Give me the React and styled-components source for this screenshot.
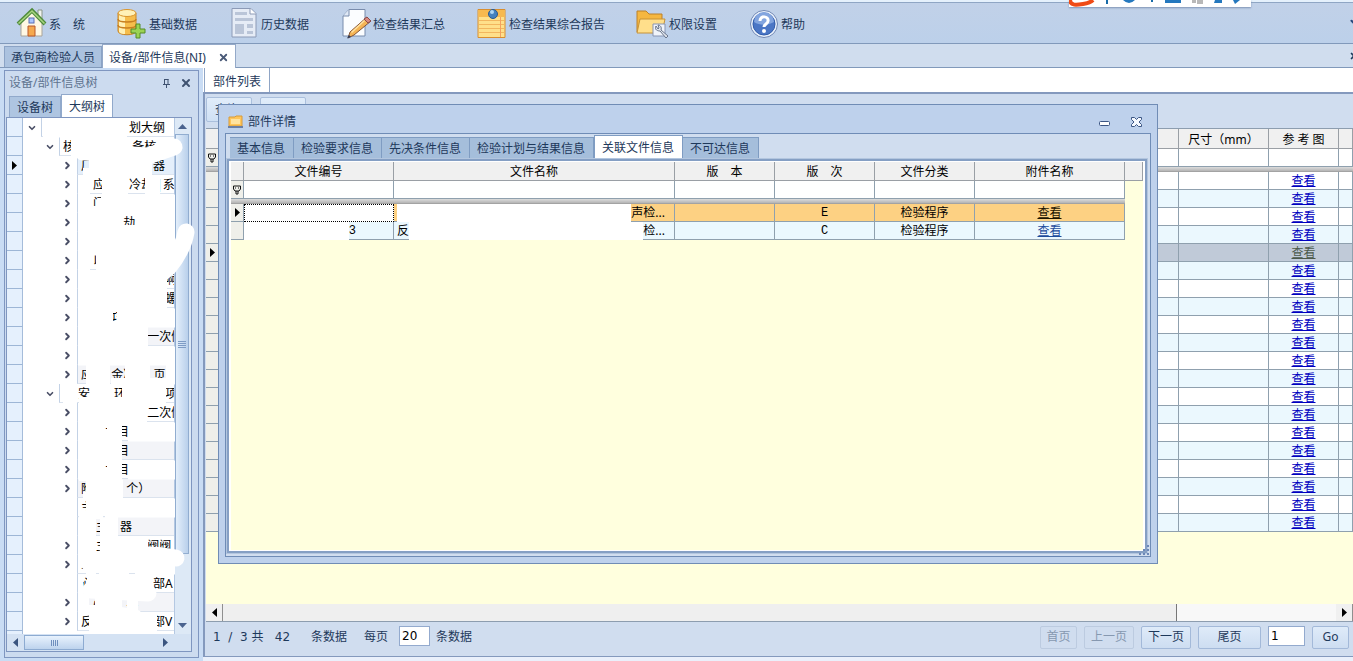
import React, { useState } from "react";
import styled, { createGlobalStyle } from "styled-components";
import { ChevronDown, ChevronRight, X } from "lucide-react";

const menuItems = [
  { label: "系　统", icon: "home" },
  { label: "基础数据", icon: "database" },
  { label: "历史数据", icon: "history" },
  { label: "检查结果汇总", icon: "edit" },
  { label: "检查结果综合报告", icon: "note" },
  { label: "权限设置", icon: "folder" },
  { label: "帮助", icon: "help" },
];

const treeRows = [
  { depth: 1, open: true, text: "　　　　　　　划大纲" },
  { depth: 2, open: true, text: "核　　　　   备核" },
  { depth: 3, chevron: true, text: "厂　　　　　器", tone: "active" },
  { depth: 3, chevron: true, text: "　应　　冷却 |系" },
  { depth: 3, chevron: true, text: "　门" },
  { depth: 3, chevron: true, text: "　　　  劫" },
  { depth: 3, chevron: true, text: "" },
  { depth: 3, chevron: true, text: "　以" },
  { depth: 3, chevron: true, text: "　　　　　　　啊" },
  { depth: 3, chevron: true, text: "　　　　　　　螺" },
  { depth: 3, chevron: true, text: "　　  巧" },
  { depth: 3, chevron: true, text: "　　　　　  一次侧", tone: "shade" },
  { depth: 3, chevron: true, text: "" },
  { depth: 3, chevron: true, text: "应　  金冷　  页", tone: "shade" },
  { depth: 2, open: true, text: "　 安　　环　　　 项" },
  { depth: 3, chevron: true, text: "　　　　　  二次侧" },
  { depth: 3, chevron: true, text: "　　力目" },
  { depth: 3, chevron: true, text: "　　　目", tone: "shade" },
  { depth: 3, chevron: true, text: "　　力目" },
  { depth: 3, chevron: true, text: "附　　   个）", tone: "shade" },
  { depth: 3, text: "主　   头" },
  { depth: 3, text: "　 主　器", tone: "shade" },
  { depth: 3, chevron: true, text: "　 主　　　 阀阀" },
  { depth: 3, chevron: true, text: "人　  人　　双" },
  { depth: 3, text: "心　　　　　部A" },
  { depth: 3, chevron: true, text: "　心　   本", tone: "shade" },
  { depth: 3, chevron: true, text: "反　　　　　部V" },
];

const detailTabs = [
  "基本信息",
  "检验要求信息",
  "先决条件信息",
  "检验计划与结果信息",
  "关联文件信息",
  "不可达信息",
];

const partRows = Array.from({ length: 20 }, (_, i) => i);

const MenuIcon = ({ name }) => {
  switch (name) {
    case "home":
      return (
        <IconSvg viewBox="0 0 32 32">
          <path d="M5 15V29H26V15L16 5z" fill="#fff8e4" stroke="#a9a49a" />
          <path d="M22 3h4v9l-4-4z" fill="#f1f4ef" stroke="#8a9787" />
          <path d="M2 17L16 3.500 29 17" fill="none" stroke="#4f8b3c" strokeWidth="4" />
          <path d="M2.500 16.500L16 4 28.500 16.500" fill="none" stroke="#a9d581" strokeWidth="1.500" />
          <rect x="13" y="11" width="5" height="5" fill="#a9c6ff" stroke="#5b6eb6" />
          <path d="M12 29V19h7v10z" fill="#f5a94e" stroke="#b8572a" />
        </IconSvg>
      );
    case "database":
      return (
        <IconSvg viewBox="0 0 32 32">
          <path d="M2 6v18c0 5 18 5 18 0V6z" fill="#f6bd4c" stroke="#c98524" />
          <path d="M3 8v17c2 2 4 2 6 2V9z" fill="#fff0b4" />
          <ellipse cx="11" cy="6" rx="9" ry="3.500" fill="#fff1b8" stroke="#d9952d" />
          <path d="M2 12c0 4 18 4 18 0M2 18c0 4 18 4 18 0" fill="none" stroke="#c87f21" strokeWidth="1.500" />
          <path d="M20 17h4v5h5v4h-5v5h-4v-5h-5v-4h5z" fill="#9bd354" stroke="#558b27" />
        </IconSvg>
      );
    case "history":
      return (
        <IconSvg viewBox="0 0 32 32">
          <path d="M4 1.500h19l5 5V30H4z" fill="#e6ecf6" stroke="#8c9ab6" />
          <path d="M22 1.500V7h6" fill="#fff" stroke="#8c9ab6" />
          <path d="M7 5h12v3H7zM7 11h18v3H7zM7 17h9v10H7zM19 17h6v4h-6zM19 24h6v3h-6z" fill="#bac5d8" />
        </IconSvg>
      );
    case "edit":
      return (
        <IconSvg viewBox="0 0 32 32">
          <path d="M9 2.500h16V29H3V9z" fill="#fbfdff" stroke="#798cac" />
          <path d="M9 2.500V9H3" fill="#dfe8f5" stroke="#798cac" />
          <path d="M27 10l4 4L14 28l-6 3 2-6z" fill="#f5b455" stroke="#855538" />
          <path d="M27 10l4 4-3 2-4-4z" fill="#d98a80" stroke="#8e4a4a" />
          <path d="M24.500 13.500L11.500 25.500" stroke="#ffe3a2" strokeWidth="1.500" />
          <path d="M9 28l2 2-4 1.500z" fill="#29395b" />
        </IconSvg>
      );
    case "note":
      return (
        <IconSvg viewBox="0 0 32 32">
          <path d="M2 2.500h27v28H2z" fill="#ffe08a" stroke="#d98e2e" />
          <path d="M2.500 3h26v7h-26z" fill="#f7b94f" />
          <path d="M3 13.500h25M3 17.500h25M3 21.500h25M3 25.500h25" stroke="#f2b65e" />
          <path d="M24.500 10v20" stroke="#f3a060" />
          <circle cx="17" cy="7" r="4.500" fill="#4582be" stroke="#295b92" />
          <circle cx="16" cy="5" r="2" fill="#acd6f5" />
        </IconSvg>
      );
    case "folder":
      return (
        <IconSvg viewBox="0 0 32 32">
          <path d="M1 25V4h9l3 3h13v19z" fill="#f5b741" stroke="#bc812b" />
          <path d="M4 12h25l-3 14H1z" fill="#ffdf8b" stroke="#c79238" />
          <path d="M17 17h12v12H17z" fill="#f0f4fb" stroke="#8794b2" />
          <path d="M20 19c-2 4 2 5 4 5l6 7 2-2-7-6c1-3-1-5-3-5l1 3-1 1z" fill="#e0e5ed" stroke="#69758b" />
        </IconSvg>
      );
    default:
      return (
        <IconSvg viewBox="0 0 32 32">
          <circle cx="16" cy="17" r="13.500" fill="#e9f0fa" stroke="#7087b4" />
          <circle cx="16" cy="17" r="11" fill="#4b76c5" stroke="#315caa" />
          <path d="M6 15a10 10 0 0 1 20 0c-5 3-14 4-20 0" fill="#83a5df" />
          <path d="M12 14c0-6 9-5 8 0 0 3-4 3-4 6" fill="none" stroke="#fff" strokeWidth="3" />
          <circle cx="16" cy="24" r="2" fill="#fff" />
        </IconSvg>
      );
  }
};

const FilterIcon = () => (
  <FilterSvg viewBox="0 0 9 10">
    <path d="M.5 1h7v3L6 6H2L.5 4zM3 6v3h2V6M2 3h1M5 3h1" fill="none" stroke="#111" />
  </FilterSvg>
);

const Arrow = ({ dir = "right", color = "#000" }) => {
  const shapes = {
    right: "M2 0L7 4.500 2 9z",
    left: "M7 0L2 4.500 7 9z",
    up: "M0 7L4.500 2 9 7z",
    down: "M0 2L4.500 7 9 2z",
  };
  return (
    <ArrowSvg viewBox="0 0 9 9">
      <path d={shapes[dir]} fill={color} />
    </ArrowSvg>
  );
};

// white strokes hiding the confidential part of the tree labels
const TreeRedaction = () => (
  <RedactionSvg viewBox="0 0 180 516">
    <path
      d="M20 10H104M48 29H106M66 48H129M55 67H67M79 67H105M122 67H137M55 86H69M78 86H152M55 105H99M115 105H152M55 124H152M55 143H67M73 143H152M55 162H144M55 181H144M55 200H90M94 200H152M55 219H125M55 238H152M63 257H87M102 257H127M143 257H152M40 276H54M68 276H89M99 276H143M55 295H124M55 314H80M84 314H99M105 314H152M55 333H99M55 352H80M84 352H99M105 352H152M63 371H100M63 390H76M82 390H152M55 409H73M77 409H95M55 428H73M77 428H125M63 447H73M76 447H106M112 447H152M55 466H60M64 466H130M55 485H66M72 485H99M104 485H115M66 504H134"
      stroke="#fff"
      strokeWidth="19"
    />
    <g fill="none" stroke="#fff" strokeLinecap="round" strokeWidth="17">
      <path d="M60 34L125 38 151 29" />
      <path d="M163 114Q160 132 145 150L120 170" />
      <path d="M65 444Q110 432 153 440" />
      <path d="M68 472L125 475M82 495L112 500" />
    </g>
    <g fill="none" stroke="#fff" strokeWidth="8">
      <path d="M60 54H72M66 92H90M98 111H120M80 207H96M88 264H104M125 264H145M56 283H72M88 283H102M56 321H85M56 359H85M60 378H64M56 397H80M56 491H72" />
    </g>
  </RedactionSvg>
);

const InputMethodBar = () => (
  <ImeBar>
    <svg width="182" height="7" viewBox="0 0 182 7">
      <path d="M1 0c0 6 7 5 13 4s9-3 10-4" fill="none" stroke="#ef4b16" strokeWidth="4" />
      <path d="M38 0v4M83 0v2" stroke="#176ba8" strokeWidth="2" />
      <path d="M54 0q6 6 12 0zM96 0h16v3H96zM146 0h7v3h-8zM164 0h7l-5 4z" fill="#2478be" />
      <path d="M123 0h4v3h-4zM128 0h6v4h-6z" fill="#b8b8b8" />
    </svg>
  </ImeBar>
);

const Sidebar = () => (
  <SidePanel>
    <SideTitle>
      <span>设备/部件信息树</span>
      <TitleTools>
        <GhostButton aria-label="固定">
          <svg width="9" height="10" viewBox="0 0 9 10">
            <path d="M2.500 1v5M6 1v5M2 1.500h4.500M1 6.500h7M4.500 7v3" fill="none" stroke="#3f5270" />
          </svg>
        </GhostButton>
        <GhostButton aria-label="关闭">
          <X size={12} strokeWidth={4} />
        </GhostButton>
      </TitleTools>
    </SideTitle>
    <SideTabs>
      <SideTab>设备树</SideTab>
      <SideTab $active>大纲树</SideTab>
    </SideTabs>
    <TreeFrame>
      <TreeBody>
        <TreeList>
          {treeRows.map((row, i) => (
            <TreeRow key={i}>
              <TreeHead>{i === 2 && <Arrow />}</TreeHead>
              <TreeToggle $depth={row.depth} aria-label="展开">
                {row.open && <ChevronDown size={10} strokeWidth={4} />}
                {row.chevron && <ChevronRight size={11} strokeWidth={4} />}
              </TreeToggle>
              <TreeLabel $tone={row.tone}>{row.text}</TreeLabel>
            </TreeRow>
          ))}
          <TreeRow>
            <TreeHead />
          </TreeRow>
        </TreeList>
        <VScroll>
          <Arrow dir="up" color="#4b648f" />
          <VThumb>
            <i />
            <i />
            <i />
            <i />
          </VThumb>
          <Arrow dir="down" color="#4b648f" />
        </VScroll>
        <TreeRedaction />
      </TreeBody>
      <HScroll>
        <Arrow dir="left" color="#3b557f" />
        <HThumb>
          <i />
          <i />
          <i />
          <i />
        </HThumb>
        <HRest />
        <Arrow dir="right" color="#3b557f" />
        <HEnd />
      </HScroll>
    </TreeFrame>
  </SidePanel>
);

const PartTable = () => (
  <DataTable>
    <colgroup>
      <col width="13" />
      <col />
      <col width="90" />
      <col width="70" />
      <col width="14" />
    </colgroup>
    <thead>
      <HeadRow $tall>
        <Th />
        <Th />
        <Th>尺寸（mm）</Th>
        <Th>参 考 图</Th>
        <Th />
      </HeadRow>
      <FilterRow>
        <HeadCell>
          <FilterIcon />
        </HeadCell>
        <Td />
        <Td />
        <Td />
        <Td />
      </FilterRow>
      <SplitRow>
        <td colSpan="5" />
      </SplitRow>
    </thead>
    <tbody>
      {partRows.map((i) => (
        <Row key={i} $tone={i === 4 ? "selected" : i % 2 ? "even" : "odd"}>
          <HeadCell>{i === 4 && <Arrow />}</HeadCell>
          <Td />
          <Td />
          <Td>
            <ViewLink href="#" $color={i === 4 ? "#4c5a4c" : "#0000c0"}>
              查看
            </ViewLink>
          </Td>
          <Td />
        </Row>
      ))}
    </tbody>
  </DataTable>
);

const FileTable = () => (
  <DataTable>
    <colgroup>
      <col width="13" />
      <col width="150" />
      <col />
      <col width="100" />
      <col width="100" />
      <col width="100" />
      <col width="150" />
      <col width="18" />
    </colgroup>
    <thead>
      <HeadRow>
        <Th />
        <Th>文件编号</Th>
        <Th>文件名称</Th>
        <Th>版　本</Th>
        <Th>版　次</Th>
        <Th>文件分类</Th>
        <Th>附件名称</Th>
        <Th />
      </HeadRow>
      <FilterRow>
        <HeadCell>
          <FilterIcon />
        </HeadCell>
        <Td />
        <Td />
        <Td />
        <Td />
        <Td />
        <Td />
        <BlankCell />
      </FilterRow>
      <SplitRow>
        <td colSpan="7" />
        <BlankCell />
      </SplitRow>
    </thead>
    <tbody>
      <Row $tone="focus">
        <HeadCell>
          <Arrow />
        </HeadCell>
        <FocusCell />
        <Td>
          <Fragments>
            <Lead />
            <Erased />
            声检...
          </Fragments>
        </Td>
        <Td />
        <MonoCell>E</MonoCell>
        <Td>检验程序</Td>
        <Td>
          <ViewLink href="#" $color="#1c1400">
            查看
          </ViewLink>
        </Td>
        <BlankCell />
      </Row>
      <Row $tone="even">
        <HeadCell />
        <MonoCell>
          <Fragments>
            <Erased />
            3<Tail />
          </Fragments>
        </MonoCell>
        <Td>
          <Fragments>
            <Lead />
            反
            <Erased />
            检...
          </Fragments>
        </Td>
        <Td />
        <MonoCell>C</MonoCell>
        <Td>检验程序</Td>
        <Td>
          <ViewLink href="#" $color="#1d4c9c">
            查看
          </ViewLink>
        </Td>
        <BlankCell />
      </Row>
    </tbody>
  </DataTable>
);

const DetailDialog = () => {
  const [tab, setTab] = useState(4);
  return (
    <Dialog role="dialog" aria-label="部件详情">
      <DialogTitle>
        <svg width="16" height="14" viewBox="0 0 16 14">
          <path d="M1 2h6l1-1h6v10H1z" fill="#ffc65b" stroke="#d79a3a" />
          <path d="M3 4h9v5H3z" fill="#ffe3a0" />
          <path d="M0 11h15v2H0z" fill="#6b7fa4" />
        </svg>
        <span>部件详情</span>
        <DialogTools>
          <GhostButton aria-label="最小化">
            <svg width="12" height="12" viewBox="0 0 12 12">
              <rect x=".5" y="5.500" width="10" height="4" rx="1" fill="#fff" stroke="#3c5684" />
            </svg>
          </GhostButton>
          <GhostButton aria-label="关闭">
            <svg width="13" height="12" viewBox="0 0 13 12">
              <path d="M1.500 1.500h3l2 2 2-2h3v2L9 6l2.500 2.500v2h-3l-2-2-2 2h-3v-2L4 6 1.500 3.500z" fill="#f5f9ff" stroke="#3c5684" />
            </svg>
          </GhostButton>
        </DialogTools>
      </DialogTitle>
      <DialogBody>
        <DialogTabs>
          {detailTabs.map((name, i) => (
            <DialogTab key={name} $active={i === tab} onClick={() => setTab(i)}>
              {name}
            </DialogTab>
          ))}
        </DialogTabs>
        <DialogGrid>
          <GridFill>
            <FileTable />
          </GridFill>
        </DialogGrid>
        <Grip viewBox="0 0 10 10">
          <path d="M8 0h2v2H8zM4 4h2v2H4zM8 4h2v2H8zM0 8h2v2H0zM4 8h2v2H4zM8 8h2v2H8z" fill="#6c88b8" />
        </Grip>
      </DialogBody>
    </Dialog>
  );
};

const App = () => (
  <>
    <GlobalStyle />
    <Window>
      <Toolbar>
        {menuItems.map((item) => (
          <MenuButton key={item.icon}>
            <MenuIcon name={item.icon} />
            <MenuText>{item.label}</MenuText>
          </MenuButton>
        ))}
        <ToolbarEnd>
          <ChevronDown size={10} strokeWidth={5} />
        </ToolbarEnd>
      </Toolbar>
      <DocTabs>
        <DocTab>承包商检验人员</DocTab>
        <DocTab $active>
          设备/部件信息(NI)
          <X size={11} strokeWidth={4} />
        </DocTab>
        <DocEnd>
          <X size={10} strokeWidth={4} />
        </DocEnd>
      </DocTabs>
      <Workspace>
        <Sidebar />
        <Main>
          <MainTabs>
            <MainTab>部件列表</MainTab>
          </MainTabs>
          <MainPanel>
            <MainTools>
              <ToolButton>查询</ToolButton>
              <ToolButton />
            </MainTools>
            <GridArea>
              <PartTable />
            </GridArea>
            <MainScroll>
              <ScrollButton aria-label="向左">
                <Arrow dir="left" />
              </ScrollButton>
              <ScrollThumb />
              <ScrollTrack />
              <ScrollButton aria-label="向右">
                <Arrow />
              </ScrollButton>
            </MainScroll>
            <Pager>
              <PageInfo>1&nbsp; /&nbsp; 3 共&nbsp;&nbsp; 42</PageInfo>
              <PageText>条数据</PageText>
              <label htmlFor="pageSize">每页</label>
              <SizeInput id="pageSize" defaultValue="20" />
              <span>条数据</span>
              <PagerRight>
                <PageButton disabled>首页</PageButton>
                <PageButton $size="mid" disabled>
                  上一页
                </PageButton>
                <PageButton $size="mid">下一页</PageButton>
                <PageButton $size="wide">尾页</PageButton>
                <PageInput aria-label="页码" defaultValue="1" />
                <PageButton>Go</PageButton>
              </PagerRight>
            </Pager>
          </MainPanel>
        </Main>
      </Workspace>
      <DetailDialog />
      <InputMethodBar />
    </Window>
  </>
);

const GlobalStyle = createGlobalStyle`
  * {
    box-sizing: border-box;
  }
  body {
    margin: 0;
    font-family: "Noto Sans", "Noto Sans CJK SC", sans-serif;
    font-size: 12px;
    line-height: 16px;
    color: #1e395b;
  }
  button, input {
    font: inherit;
    color: inherit;
    margin: 0;
    padding: 0;
  }
`;

const Window = styled.div`
  position: relative;
  height: 100vh;
  min-height: 600px;
  display: flex;
  flex-direction: column;
  overflow: hidden;
  background: #c9dcf4;
  white-space: nowrap;
`;

const Toolbar = styled.nav`
  height: 44px;
  flex: none;
  display: flex;
  align-items: center;
  gap: 31px;
  padding: 1px 0 0 16px;
  border-top: 2px solid #e5f1fc;
  border-bottom: 1px solid #8199ba;
  background: linear-gradient(#8fa6c4 1px, #c1d1e8 1px, #bcd0ea);
`;

const MenuButton = styled.button`
  display: flex;
  align-items: center;
  gap: 1px;
  border: 0;
  background: none;
`;

const MenuText = styled.span`
  padding-top: 4px;
`;

const IconSvg = styled.svg`
  width: 32px;
  height: 32px;
`;

const ToolbarEnd = styled.span`
  margin-left: auto;
  margin-right: -6px;
  color: #27477b;
`;

const DocTabs = styled.div`
  height: 24px;
  flex: none;
  display: flex;
  align-items: stretch;
  padding-left: 4px;
  background: #d0ddee;
  border-bottom: 1px solid #8199ba;
`;

const DocTab = styled.button`
  display: flex;
  align-items: center;
  gap: 12px;
  padding: 2px 6px 0;
  border: 1px solid ${({ $active }) => ($active ? "#94a9c8" : "#8ba3c5")};
  border-bottom: 0;
  margin: ${({ $active }) => ($active ? "0 0 -1px" : "2px 0 0")};
  background: ${({ $active }) => ($active ? "#fff" : "#abc2df")};
  svg {
    color: #4a5a78;
  }
`;

const DocEnd = styled.span`
  display: flex;
  align-items: center;
  margin-left: auto;
  margin-right: -6px;
`;

const Workspace = styled.div`
  flex: 1;
  min-height: 0;
  display: flex;
  gap: 4px;
  padding-left: 4px;
`;

const SidePanel = styled.aside`
  width: 195px;
  flex: none;
  display: flex;
  flex-direction: column;
  margin: 2px 0 3px;
  padding: 0 6px 5px 1px;
  border: 1px solid #7f96c0;
  background: #ccdbef;
`;

const SideTitle = styled.div`
  height: 23px;
  flex: none;
  display: flex;
  align-items: center;
  justify-content: space-between;
  padding-left: 3px;
  color: #60748f;
`;

const TitleTools = styled.div`
  display: flex;
  gap: 9px;
  color: #3f5270;
`;

const GhostButton = styled.button`
  display: flex;
  align-items: center;
  border: 0;
  background: none;
`;

const SideTabs = styled.div`
  height: 23px;
  flex: none;
  display: flex;
  padding-left: 3px;
`;

const SideTab = styled.button`
  width: 52px;
  border: 1px solid #91a9cb;
  border-bottom: 0;
  margin-top: ${({ $active }) => ($active ? "0" : "2px")};
  padding-top: 2px;
  background: ${({ $active }) => ($active ? "#fff" : "#aec5e1")};
`;

const TreeFrame = styled.div`
  flex: 1;
  min-height: 0;
  display: flex;
  flex-direction: column;
  border: 1px solid #7f96c0;
  background: #d3e1f2;
`;

const TreeBody = styled.div`
  position: relative;
  flex: 1;
  min-height: 0;
  display: flex;
`;

const TreeList = styled.ul`
  flex: 1;
  min-width: 0;
  overflow: hidden;
  margin: 0;
  padding: 0;
  list-style: none;
  background: #fff;
  color: #000;
`;

const TreeRow = styled.li`
  height: 19px;
  display: flex;
`;

const TreeHead = styled.span`
  width: 16px;
  flex: none;
  display: flex;
  align-items: center;
  justify-content: center;
  border-right: 1px solid #a5bcda;
  border-bottom: 1px solid #9db6d6;
  background: #e5f0fd;
`;

const TreeToggle = styled.button`
  width: 18px;
  flex: none;
  display: flex;
  align-items: center;
  justify-content: center;
  margin-left: ${({ $depth }) => ($depth - 1) * 18}px;
  padding-right: 1px;
  border: 0;
  background: none;
  color: #4a4f66;
`;

const labelTones = { active: "#e4effb", shade: "#f3f4f8" };

const TreeLabel = styled.span`
  flex: 1;
  min-width: 0;
  overflow: hidden;
  padding: 2px 0 0 3px;
  border-left: 1px solid #c3d2e6;
  border-bottom: 1px solid #dbe3ee;
  background: ${({ $tone }) => labelTones[$tone] || "#fff"};
  white-space: pre;
`;

const VScroll = styled.div`
  width: 17px;
  flex: none;
  display: flex;
  flex-direction: column;
  align-items: center;
  gap: 3px;
  padding: 4px 2px 4px 0;
  border-left: 1px solid #b4c8e2;
  background: #dde9f6;
`;

const VThumb = styled.div`
  width: 14px;
  flex: 1;
  display: flex;
  flex-direction: column;
  align-items: center;
  justify-content: center;
  gap: 1px;
  margin-bottom: 64px;
  border: 1px solid #91add0;
  background: linear-gradient(90deg, #e4effb, #b9d0eb);
  i {
    width: 8px;
    height: 1px;
    background: #7e9cc5;
  }
`;

const HScroll = styled.div`
  height: 17px;
  flex: none;
  display: flex;
  align-items: center;
  gap: 4px;
  padding-left: 4px;
  background: #d4e2f3;
`;

const HThumb = styled.div`
  width: 60px;
  height: 15px;
  display: flex;
  align-items: center;
  justify-content: center;
  gap: 1px;
  border: 1px solid #8dabd1;
  background: linear-gradient(#e8f2fd, #bdd3ed);
  i {
    width: 1px;
    height: 6px;
    background: #6f8fbe;
  }
`;

const HRest = styled.span`
  flex: 1;
`;

const HEnd = styled.span`
  width: 17px;
`;

const RedactionSvg = styled.svg`
  position: absolute;
  left: 16px;
  top: 0;
  width: 180px;
  height: 516px;
  pointer-events: none;
`;

const ArrowSvg = styled.svg`
  width: 9px;
  height: 9px;
  flex: none;
`;

const FilterSvg = styled.svg`
  width: 9px;
  height: 10px;
`;

const Main = styled.main`
  flex: 1;
  min-width: 0;
  display: flex;
  flex-direction: column;
`;

const MainTabs = styled.div`
  height: 24px;
  flex: none;
  display: flex;
  padding-left: 1px;
  background: #fff;
`;

const MainTab = styled.button`
  width: 66px;
  padding-top: 3px;
  border: 1px solid #8fa5c5;
  border-top: 0;
  border-bottom: 0;
  background: #fff;
`;

const MainPanel = styled.section`
  flex: 1;
  min-height: 0;
  display: flex;
  flex-direction: column;
  border: 2px solid #8499bd;
  border-right: 0;
  border-bottom-width: 1px;
  margin-bottom: 4px;
  box-shadow: 0 4px #eaf0fb;
  background: #d0ddef;
  padding-left: 1px;
`;

const MainTools = styled.div`
  height: 34px;
  flex: none;
  display: flex;
  gap: 8px;
  padding: 3px 0 6px;
`;

const ToolButton = styled.button`
  width: 46px;
  padding-left: 8px;
  border: 1px solid #aabfdc;
  border-radius: 2px;
  background: linear-gradient(#e1edfa, #cfe0f4);
  text-align: left;
`;

const GridArea = styled.div`
  flex: 1;
  min-height: 0;
  overflow: hidden;
  border-top: 1px solid #8d9daf;
  background: #ffffde;
`;

const DataTable = styled.table`
  width: 100%;
  table-layout: fixed;
  border-collapse: separate;
  border-spacing: 0;
  color: #000;
  text-align: center;
`;

const Th = styled.th`
  padding: 2px 0 0;
  border-right: 1px solid #9a9fa5;
  border-bottom: 1px solid #9a9fa5;
  background: #f0f0f0;
  font-weight: normal;
`;

const HeadRow = styled.tr`
  height: ${({ $tall }) => ($tall ? 20 : 19)}px;
`;

const FilterRow = styled.tr`
  height: 18px;
  background: #fff;
`;

const SplitRow = styled.tr`
  height: 5px;
  td {
    padding: 0;
    background: linear-gradient(#dcdcdc, #b4b4b4);
    border-bottom: 1px solid #a3a3a3;
  }
`;

const rowTones = {
  odd: "#fff",
  even: "#ebf8fe",
  selected: "#c0cad8",
  focus: "#fdd183",
};

const Row = styled.tr`
  height: 18px;
  background: ${({ $tone }) => rowTones[$tone]};
`;

const Td = styled.td`
  padding: 0;
  border-right: 1px solid #8fa0ae;
  border-bottom: 1px solid #8fa0ae;
`;

const HeadCell = styled(Td)`
  background: #efefea;
  line-height: 0;
`;

const MonoCell = styled(Td)`
  font-family: "Liberation Mono", monospace;
`;

const FocusCell = styled(Td)`
  border: 1px dotted #000;
  background: #fff;
`;

const BlankCell = styled.td`
  && {
    padding: 0;
    border: 0;
    background: #ffffde;
  }
`;

const Fragments = styled.div`
  height: 17px;
  display: flex;
  align-items: center;
  padding-right: 9px;
`;

const Erased = styled.span`
  flex: 1;
  align-self: stretch;
  margin-bottom: -1px;
  background: #fff;
`;

const Lead = styled.span`
  width: 3px;
`;

const Tail = styled.span`
  width: 28px;
`;

const ViewLink = styled.a`
  color: ${({ $color }) => $color};
`;

const MainScroll = styled.div`
  height: 18px;
  flex: none;
  display: flex;
  border-bottom: 1px solid #8d9daf;
  background: #f8f8f8;
`;

const ScrollButton = styled.button`
  width: 17px;
  display: flex;
  align-items: center;
  justify-content: center;
  border: 0;
  border-right: 1px solid #8f8f8f;
  background: #f0f0f0;
`;

const ScrollThumb = styled.div`
  flex: 6;
  border-right: 1px solid #777;
  background: #efefef;
`;

const ScrollTrack = styled.div`
  flex: 1;
`;

const Pager = styled.footer`
  height: 34px;
  flex: none;
  display: flex;
  align-items: center;
  padding: 0 4px 4px 7px;
`;

const PageInfo = styled.span`
  width: 98px;
  font-family: "DejaVu Sans", "Noto Sans CJK SC", sans-serif;
`;

const PageText = styled.span`
  width: 53px;
`;

const SizeInput = styled.input`
  width: 31px;
  height: 20px;
  margin: 0 6px 2px 11px;
  padding-left: 2px;
  border: 1px solid #93aace;
  background: #fff;
  color: #000;
  font-family: "DejaVu Sans", sans-serif;
`;

const PagerRight = styled.div`
  display: flex;
  gap: 7px;
  margin-left: auto;
`;

const buttonWidths = { mid: 50, wide: 63 };

const PageButton = styled.button`
  width: ${({ $size }) => buttonWidths[$size] || 37}px;
  height: 23px;
  border: 1px solid #a3b9d9;
  border-radius: 2px;
  background: linear-gradient(#dfebf9, #cdddf1);
  &:disabled {
    color: #8698b0;
    border-color: #bccbe0;
    background: #d0ddef;
  }
`;

const PageInput = styled(SizeInput)`
  width: 37px;
  margin: 0;
`;

const Dialog = styled.section`
  position: absolute;
  top: 104px;
  right: 195px;
  bottom: 97px;
  left: 218px;
  display: flex;
  flex-direction: column;
  padding: 0 6px 6px;
  border: 1px solid #708cb5;
  background: #bed1ec;
`;

const DialogTitle = styled.header`
  height: 28px;
  flex: none;
  display: flex;
  align-items: center;
  gap: 4px;
  padding: 6px 8px 0 3px;
`;

const DialogTools = styled.div`
  display: flex;
  gap: 19px;
  margin-left: auto;
`;

const DialogBody = styled.div`
  position: relative;
  flex: 1;
  min-height: 0;
  display: flex;
  flex-direction: column;
  padding: 0 3px 3px 1px;
  border: 1px solid #6f8cb6;
  background: #d0ddef;
`;

const DialogTabs = styled.div`
  height: 25px;
  flex: none;
  display: flex;
  align-items: stretch;
  padding: 1px 0 0 3px;
`;

const DialogTab = styled.button`
  padding: 0 8px 0 7px;
  margin-top: ${({ $active }) => ($active ? "0" : "2px")};
  border: 1px solid #7f9cc2;
  border-bottom: 0;
  border-left-width: ${({ $active }) => ($active ? "1px" : "0")};
  background: ${({ $active }) => ($active ? "#fff" : "#a5bedb")};
`;

const DialogGrid = styled.div`
  flex: 1;
  min-height: 0;
  display: flex;
  border: 2px solid #859fc4;
  outline: 1px solid #b3c6df;
  padding: 1px 2px 1px 2px;
  background: #fff;
`;

const GridFill = styled.div`
  flex: 1;
  min-width: 0;
  background: #ffffde;
`;

const Grip = styled.svg`
  position: absolute;
  right: 1px;
  bottom: 1px;
  width: 10px;
  height: 10px;
`;

const ImeBar = styled.div`
  position: absolute;
  top: 0;
  right: 102px;
  height: 7px;
  background: #fff;
  box-shadow: 0 1px 2px #7f94b5;
  line-height: 0;
`;

export default App;
